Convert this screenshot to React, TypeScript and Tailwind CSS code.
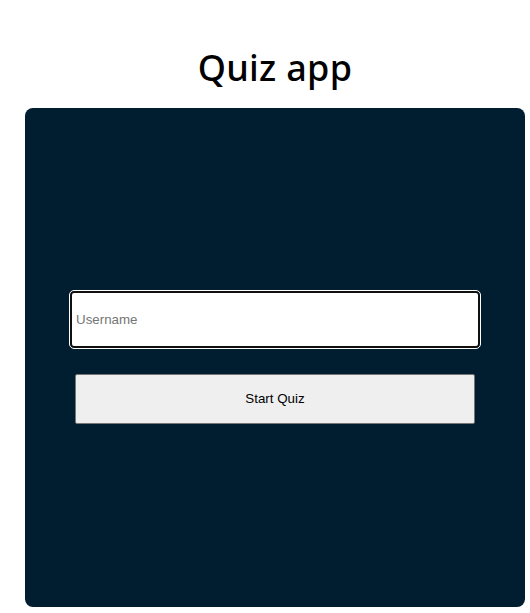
import React, { useState } from 'react';

export default function App() {
    const [username, setUsername] = useState('');

    return (
        <div className="min-h-screen bg-white font-['Liberation_Sans',Arial,sans-serif]">
            <div className="ml-[25px] w-[500px] flex flex-col items-center">
                {/* Title */}
                <h1 className="pt-[44px] pb-[16px] text-[36px] leading-[48px] text-black font-['Noto_Sans',sans-serif] font-medium tracking-[0.3px]">
                    Quiz app
                </h1>

                {/* Card */}
                <div className="w-[500px] h-[499px] rounded-lg bg-[#011d30] flex flex-col items-center justify-center gap-[26px]">
                    <input
                        autoFocus
                        type="text"
                        value={username}
                        onChange={(e) => setUsername(e.target.value)}
                        placeholder="Username"
                        className="w-[410px] h-[57px] bg-white border-2 border-[#101010] rounded-[4px] outline outline-1 outline-white pl-[4px] text-[13.333px] text-black placeholder:text-[#757575] focus:outline focus:outline-1 focus:outline-white caret-black"
                    />
                    <button className="w-[400px] h-[50px] bg-[#efefef] border border-[#767676] rounded-[2px] text-[13.333px] text-black">
                        Start Quiz
                    </button>
                </div>
            </div>
        </div>
    );
}
